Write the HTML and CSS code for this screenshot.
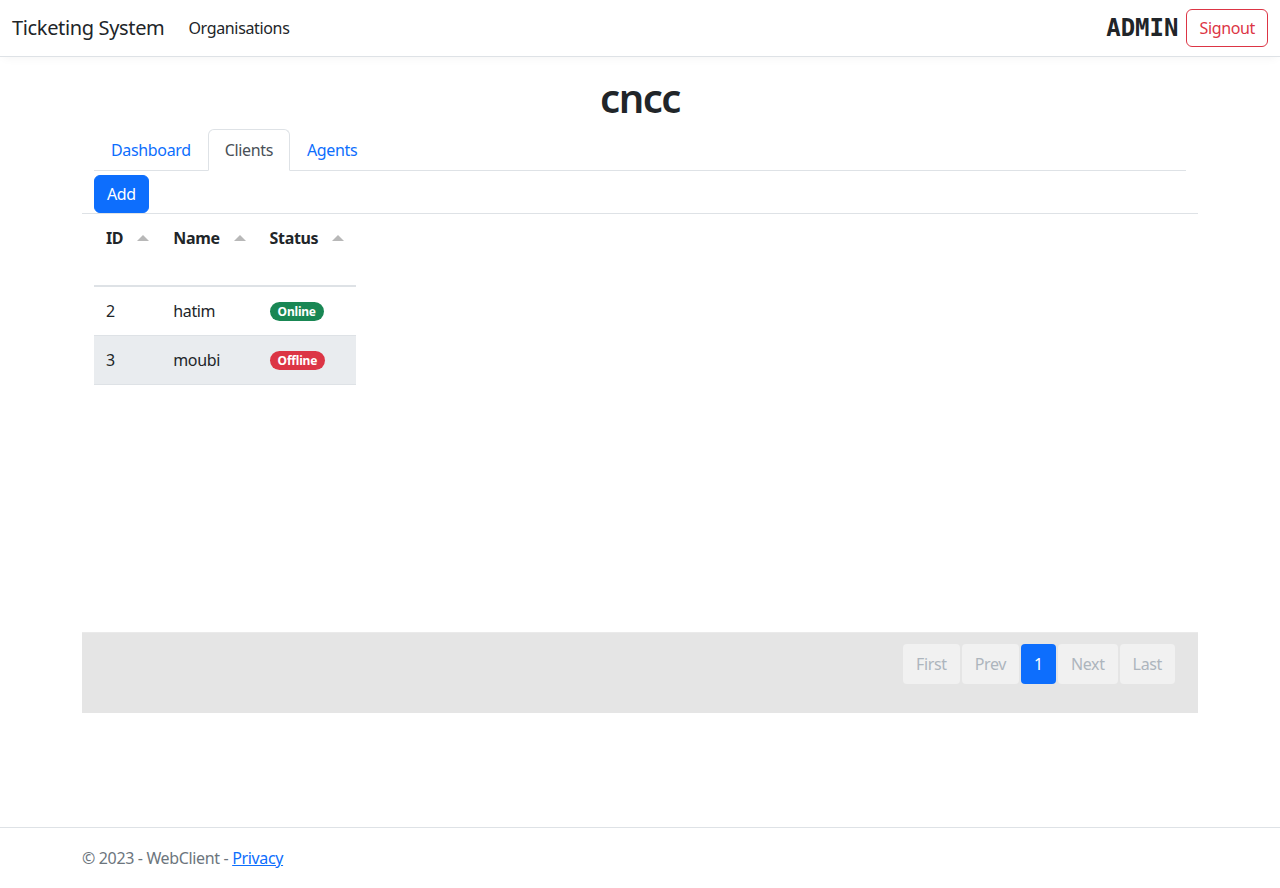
FILE: index.html
```html
<!DOCTYPE html>
<html lang="en">
<head>
<meta charset="utf-8">
<title>cncc - Ticketing System</title>
<link rel="stylesheet" href="styles.css">
</head>
<body>
<div class="page">
  <header class="navbar">
    <div class="nav-left">
      <a class="brand" href="#">Ticketing System</a>
      <a class="nav-link" href="#">Organisations</a>
    </div>
    <div class="nav-right">
      <span class="admin">ADMIN</span>
      <button class="btn-signout">Signout</button>
    </div>
  </header>

  <main class="container">
    <h1 class="title">cncc</h1>
    <div class="inner">
      <ul class="tabs">
        <li><a class="tab" href="#">Dashboard</a></li>
        <li><a class="tab active" href="#">Clients</a></li>
        <li><a class="tab" href="#">Agents</a></li>
      </ul>
      <div class="toolbar">
        <button class="btn-add">Add</button>
      </div>
    </div>

    <div class="table-wrap">
      <div class="table-body">
        <table class="table">
          <thead>
            <tr>
              <th class="col-id"><div class="th-inner">ID<span class="sort"></span></div><div class="fht"></div></th>
              <th class="col-name"><div class="th-inner">Name<span class="sort"></span></div><div class="fht"></div></th>
              <th class="col-status"><div class="th-inner">Status<span class="sort"></span></div><div class="fht"></div></th>
            </tr>
          </thead>
          <tbody>
            <tr>
              <td>2</td>
              <td>hatim</td>
              <td><span class="badge online">Online</span></td>
            </tr>
            <tr class="hover">
              <td>3</td>
              <td>moubi</td>
              <td><span class="badge offline">Offline</span></td>
            </tr>
          </tbody>
        </table>
      </div>
      <div class="pager-bar">
        <ul class="pager">
          <li><span class="pg">First</span></li>
          <li><span class="pg">Prev</span></li>
          <li><span class="pg current">1</span></li>
          <li><span class="pg">Next</span></li>
          <li><span class="pg">Last</span></li>
        </ul>
      </div>
    </div>
  </main>

  <footer class="footer">
    <div class="footer-inner">&copy; 2023 - WebClient - <a href="#">Privacy</a></div>
  </footer>
</div>
</body>
</html>
```

FILE: styles.css
```css
* { box-sizing: border-box; }
html, body { margin: 0; padding: 0; }
body {
  font-family: "Noto Sans", "Open Sans", "DejaVu Sans", sans-serif;
  font-size: 16px;
  line-height: 1.5;
  letter-spacing: -0.35px;
  color: #212529;
  background: #fff;
}
.page {
  min-height: 100vh;
  display: flex;
  flex-direction: column;
}
a { color: #0d6efd; text-decoration: none; }

/* navbar */
.navbar {
  height: 57px;
  display: flex;
  align-items: center;
  justify-content: space-between;
  padding: 0 12px;
  border-bottom: 1px solid #dee2e6;
  box-shadow: 0 4px 10px -4px rgba(0,0,0,0.06);
}
.nav-left { display: flex; align-items: center; }
.brand {
  font-size: 20px;
  color: #212529;
  margin-right: 16px;
  line-height: 30px;
}
.nav-link {
  color: #212529;
  padding: 8px;
  font-size: 16px;
}
.nav-right { display: flex; align-items: center; gap: 8px; }
.admin {
  font-family: "DejaVu Sans Mono", "Liberation Mono", monospace;
  font-weight: bold;
  font-size: 24px;
  letter-spacing: 0;
  color: #212529;
  line-height: 28px;
}
.btn-signout {
  font-family: inherit;
  font-size: 16px;
  letter-spacing: -0.35px;
  color: #dc3545;
  background: #fff;
  border: 1px solid #dc3545;
  border-radius: 6px;
  height: 38px;
  padding: 0 12px;
  line-height: 24px;
}

/* main */
.container {
  width: 1116px;
  margin: 0 auto;
  flex: 1;
}
.title {
  text-align: center;
  font-size: 40px;
  font-weight: 600;
  letter-spacing: -1.5px;
  line-height: 48px;
  margin: 17px 0 7px;
}
.inner { padding: 0 12px; }
.tabs {
  list-style: none;
  margin: 0;
  padding: 0;
  display: flex;
  border-bottom: 1px solid #dee2e6;
}
.tab {
  display: block;
  padding: 8px 16px;
  border: 1px solid transparent;
  border-top-left-radius: 6px;
  border-top-right-radius: 6px;
  margin-bottom: -1px;
  color: #0d6efd;
  line-height: 24px;
}
.tab.active {
  color: #495057;
  background: #fff;
  border-color: #dee2e6 #dee2e6 #fff;
}
.toolbar { padding-top: 4px; }
.btn-add {
  font-family: inherit;
  font-size: 16px;
  letter-spacing: -0.35px;
  color: #fff;
  background: #0d6efd;
  border: 1px solid #0d6efd;
  border-radius: 6px;
  height: 38px;
  padding: 0 12px;
  line-height: 24px;
  display: block;
}

/* table */
.table-body {
  border-top: 1px solid #dee2e6;
  padding: 0 12px;
  height: 419px;
}
.table {
  border-collapse: collapse;
}
.table thead th {
  text-align: left;
  padding: 0;
  font-weight: 700;
  border-bottom: 2px solid #dee2e6;
  vertical-align: top;
}
.th-inner {
  padding: 12px;
  line-height: 24px;
  display: flex;
  align-items: center;
}
.fht { height: 23px; }
.sort {
  display: inline-block;
  width: 0; height: 0;
  border-left: 6px solid transparent;
  border-right: 6px solid transparent;
  border-bottom: 6px solid #b8b8b8;
  margin-left: 14px;
}
.table tbody td {
  padding: 12px;
  line-height: 24px;
  border-bottom: 1px solid #dee2e6;
}
.table tbody tr.hover td { background: #e9ecef; }
.badge {
  display: inline-block;
  font-size: 12px;
  font-weight: 700;
  letter-spacing: -0.2px;
  color: #fff;
  line-height: 1;
  padding: 4px 8px 3px;
  border-radius: 10px;
  vertical-align: 1px;
}
.badge.online { background: #198754; }
.badge.offline { background: #dc3545; }

/* pager */
.pager-bar {
  background: #e5e5e5;
  border-top: 1px solid #eaeaea;
  height: 81px;
  padding: 11px 23px 0 0;
  display: flex;
  justify-content: flex-end;
  align-items: flex-start;
}
.pager {
  list-style: none;
  margin: 0;
  padding: 0;
  display: flex;
  gap: 2px;
}
.pg {
  display: block;
  height: 40px;
  line-height: 40px;
  padding: 0 13px;
  background: #f1f1f1;
  color: #adb5bd;
  border-radius: 4px;
}
.pg.current {
  background: #0d6efd;
  color: #fff;
}

/* footer */
.footer {
  border-top: 1px solid #dee2e6;
  height: 61px;
  line-height: 60px;
  color: #6c757d;
  white-space: nowrap;
}
.footer-inner { width: 1116px; margin: 0 auto; }
.footer a { text-decoration: underline; }
```
